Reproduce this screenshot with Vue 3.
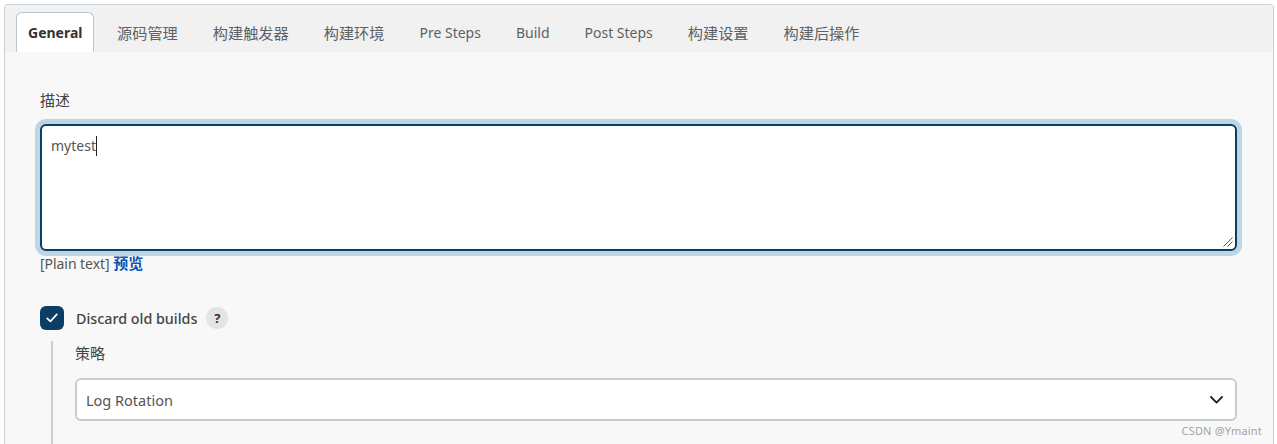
<script setup>
const tabs = ['General', '源码管理', '构建触发器', '构建环境', 'Pre Steps', 'Build', 'Post Steps', '构建设置', '构建后操作']
const isCjk = (text) => /[^\x00-\x7f]/.test(text)
</script>

<template>
  <div class="page">
    <div class="panel">
      <!-- Tab strip -->
      <div class="tabs">
        <a
          v-for="(tab, i) in tabs"
          :key="tab"
          class="tab"
          :class="{ active: i === 0, cjk: isCjk(tab) }"
        >{{ tab }}</a>
      </div>

      <div class="content">
        <label class="label">描述</label>
        <div class="editor">
          <div class="editor-text">mytest<span class="caret"></span></div>
          <svg class="grip" width="12" height="12" viewBox="0 0 12 12">
            <path d="M1.5 10.5 10.5 1.5M5.5 10.5l5-5" stroke="#555" stroke-width="1" fill="none" />
          </svg>
        </div>
        <div class="hint">[Plain text] <a class="preview">预览</a></div>

        <div class="check-row">
          <span class="checkbox">
            <svg width="12" height="10" viewBox="0 0 12 10">
              <path d="M1.2 5.4 4.4 8.4 10.8 1.4" stroke="#fff" stroke-width="1.7" fill="none" stroke-linecap="round" stroke-linejoin="round" />
            </svg>
          </span>
          <span class="check-label">Discard old builds</span>
          <span class="help">?</span>
        </div>

        <!-- Nested options -->
        <div class="nested">
          <label class="label strategy">策略</label>
          <div class="select">
            <span>Log Rotation</span>
            <svg width="13" height="8" viewBox="0 0 13 8">
              <path d="M1 1 6.5 6.6 12 1" stroke="#222" stroke-width="1.8" fill="none" stroke-linecap="round" stroke-linejoin="round" />
            </svg>
          </div>
        </div>
      </div>
    </div>
    <div class="watermark">CSDN @Ymaint</div>
  </div>
</template>

<style>
html, body {
  margin: 0;
  background: #fff;
}
</style>

<style scoped>
.page {
  position: relative;
  height: 444px;
  overflow: hidden;
  padding: 4px 3px 0 4px;
  box-sizing: border-box;
  background: #fff;
  font-family: "Noto Sans", "Open Sans", "Noto Sans CJK SC", sans-serif;
  font-size: 14px;
  color: #444;
}

.panel {
  height: 460px;
  border: 1px solid #c6d0d6;
  border-radius: 3px 3px 0 0;
  background: #f8f8f8;
}

.tabs {
  display: flex;
  height: 47px;
  padding: 7px 0 0 11px;
  box-sizing: border-box;
  background: #f1f1f1;
}

.tab {
  display: flex;
  align-items: center;
  padding: 0 11.5px;
  margin-right: 12px;
  color: #5b6167;
  white-space: nowrap;
}

.tab.cjk {
  font-size: 15.2px;
}

.tab.active {
  margin-right: 12px;
  padding: 0 10px 0 11px;
  border: 1px solid #b9c4cb;
  border-bottom: 0;
  border-radius: 6px 6px 0 0;
  background: #fff;
  color: #333;
  font-weight: 700;
}

.content {
  padding: 38px 36px 0 35px;
}

.label {
  display: block;
  height: 20px;
  font-size: 15px;
  line-height: 20px;
  color: #444;
}

.editor {
  position: relative;
  height: 127px;
  margin-top: 14px;
  box-sizing: border-box;
  padding: 10px 9px;
  border: 2px solid #0b3e63;
  border-radius: 6px;
  background: #fff;
  box-shadow: 0 0 0 5px #bdd6e7;
}

.editor-text {
  line-height: 20px;
  color: #555;
}

.caret {
  display: inline-block;
  width: 1px;
  height: 20px;
  vertical-align: top;
  background: #222;
}

.grip {
  position: absolute;
  right: 1px;
  bottom: 1px;
}

.hint {
  height: 20px;
  margin-top: 2px;
  line-height: 20px;
  letter-spacing: -0.05px;
  color: #555;
}

.preview {
  color: #0b55b5;
  font-size: 15px;
  font-weight: 700;
}

.check-row {
  display: flex;
  align-items: center;
  height: 24px;
  margin-top: 33px;
}

.checkbox {
  display: flex;
  align-items: center;
  justify-content: center;
  width: 24px;
  height: 24px;
  border-radius: 6px;
  background: #0b3e63;
}

.check-label {
  margin-left: 12px;
  color: #444;
  font-size: 14.3px;
  font-weight: 500;
}

.help {
  width: 22px;
  height: 22px;
  margin-left: 9px;
  border-radius: 50%;
  background: #e4e4e4;
  color: #333;
  font-size: 13px;
  font-weight: 700;
  line-height: 22px;
  text-align: center;
}

.nested {
  margin: 11px 0 0 11px;
  padding: 2px 0 30px 22px;
  border-left: 2px solid #c6d0d6;
}

.strategy {
  height: 20px;
}

.select {
  display: flex;
  align-items: center;
  justify-content: space-between;
  height: 43px;
  margin-top: 15px;
  padding: 1px 12px 0 9px;
  box-sizing: border-box;
  border: 2px solid #c3ced3;
  border-radius: 6px;
  background: #fff;
  color: #555;
  font-size: 14.5px;
}

.watermark {
  position: absolute;
  top: 423px;
  right: 15px;
  color: #a3a3a3;
  font-size: 11px;
  line-height: 16px;
  letter-spacing: 0.2px;
}
</style>
